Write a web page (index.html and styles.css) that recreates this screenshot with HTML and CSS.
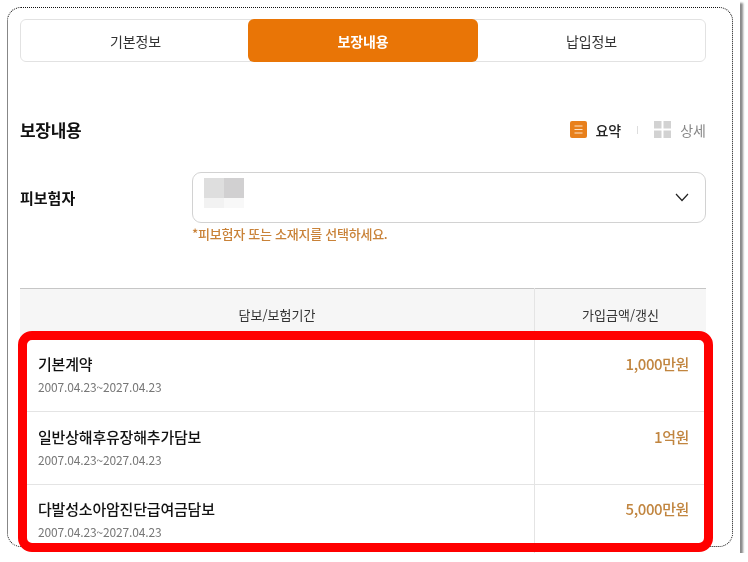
FILE: index.html
```html
<!DOCTYPE html>
<html lang="ko">
<head>
    <meta charset="UTF-8">
    <meta name="viewport" content="width=device-width, initial-scale=1.0">
    <title>보장내용</title>
    <link rel="stylesheet" href="styles.css">
</head>
<body>
    <div class="screen">
        <div class="dashed-box">
            <!-- Tabs -->
            <div class="tabs">
                <div class="tab first">기본정보</div>
                <div class="tab active">보장내용</div>
                <div class="tab">납입정보</div>
            </div>

            <!-- Title row -->
            <div class="title-row">
                <h2>보장내용</h2>
                <div class="view-switch">
                    <span class="view-item on">
                        <svg width="17" height="17" viewBox="0 0 17 17">
                            <rect width="17" height="17" rx="2" fill="#e8801c"/>
                            <path d="M4.5 5h8M4.5 8.5h8M4.5 12h8" stroke="#fbe3c8" stroke-width="1.2"/>
                        </svg>
                        요약
                    </span>
                    <span class="view-sep"></span>
                    <span class="view-item">
                        <svg width="17" height="17" viewBox="0 0 17 17" fill="#d2d2d2">
                            <rect width="7.5" height="7.5"/>
                            <rect x="9.5" width="7.5" height="7.5"/>
                            <rect y="9.5" width="7.5" height="7.5"/>
                            <rect x="9.5" y="9.5" width="7.5" height="7.5"/>
                        </svg>
                        상세
                    </span>
                </div>
            </div>

            <!-- Insured person select -->
            <div class="insured-row">
                <div class="insured-label">피보험자</div>
                <div class="insured-field">
                    <div class="select-box">
                        <div class="blurred-name">
                            <i class="px-a"></i><i class="px-b"></i><i class="px-c"></i><i class="px-d"></i>
                        </div>
                        <svg width="14" height="9" viewBox="0 0 14 9" fill="none">
                            <path d="M1 1l6 6.5L13 1" stroke="#222" stroke-width="1.2"/>
                        </svg>
                    </div>
                    <p class="hint">*피보험자 또는 소재지를 선택하세요.</p>
                </div>
            </div>

            <!-- Coverage table -->
            <table class="coverage">
                <thead>
                    <tr>
                        <th>담보/보험기간</th>
                        <th class="col-amount">가입금액/갱신</th>
                    </tr>
                </thead>
                <tbody>
                    <tr>
                        <td><strong>기본계약</strong><span>2007.04.23~2027.04.23</span></td>
                        <td class="amount">1,000만원</td>
                    </tr>
                    <tr>
                        <td><strong>일반상해후유장해추가담보</strong><span>2007.04.23~2027.04.23</span></td>
                        <td class="amount">1억원</td>
                    </tr>
                    <tr>
                        <td><strong>다발성소아암진단급여금담보</strong><span>2007.04.23~2027.04.23</span></td>
                        <td class="amount">5,000만원</td>
                    </tr>
                </tbody>
            </table>
        </div>

        <!-- Red highlight over the rows -->
        <div class="highlight"></div>
    </div>
</body>
</html>
```

FILE: styles.css
```css
/* General */
body {
    margin: 0;
    background: #fff;
    font-family: "Noto Sans CJK KR", "Noto Sans", sans-serif;
    color: #222;
    overflow: hidden;
}

/* the reference is a slightly soft capture */
.screen {
    position: relative;
    width: 740px;
    height: 553px;
    box-shadow: 3px 3px 2px #8a8a8a;
    overflow: hidden;
    filter: blur(0.3px);
}

.dashed-box {
    box-sizing: border-box;
    width: 726px;
    height: 540px;
    margin: 7px 0 0 7px;
    padding: 11px 26px 0 12px;
    border: 1px dotted #111;
    border-radius: 14px;
}

/* Tabs */
.tabs {
    display: grid;
    grid-template-columns: 227px 230px 1fr;
    height: 43px;
    box-sizing: border-box;
    border: 1px solid #e2e2e2;
    border-radius: 6px;
}

.tab {
    display: flex;
    align-items: center;
    justify-content: center;
    font-size: 14px;
    letter-spacing: -0.1px;
    color: #333;
}

.tab.first {
    padding-left: 2px;
}

.tab.active {
    margin: -1px 0;
    background: #e97506;
    border-radius: 6px;
    color: #fff;
    font-weight: 700;
}

/* Title row */
.title-row {
    display: flex;
    align-items: center;
    justify-content: space-between;
    margin-top: 53px;
    height: 28px;
}

.title-row h2 {
    margin: 0;
    font-size: 17px;
    letter-spacing: -0.3px;
    font-weight: 700;
    color: #111;
}

.view-switch {
    display: flex;
    align-items: center;
    margin-top: 1px;
    font-size: 14px;
}

.view-item {
    display: flex;
    align-items: center;
    gap: 9px;
    color: #888;
}

.view-item.on {
    gap: 8px;
    font-weight: 500;
    color: #222;
}

.view-sep {
    width: 1px;
    height: 8px;
    margin: 0 16px;
    background: #ddd;
}

/* Insured person */
.insured-row {
    display: flex;
    margin-top: 29px;
}

.insured-label {
    width: 172px;
    padding-top: 15px;
    font-size: 15px;
    font-weight: 700;
    color: #111;
}

.insured-field {
    flex: 1;
}

.select-box {
    display: flex;
    align-items: center;
    justify-content: space-between;
    box-sizing: border-box;
    height: 51px;
    padding: 0 16px 0 11px;
    border: 1px solid #d2d2d2;
    border-radius: 9px;
}

.blurred-name {
    display: grid;
    grid-template-columns: 20px 20px;
    grid-template-rows: 20px 10px;
    margin-top: -9px;
}

.px-a { background: #dedede; }
.px-b { background: #d1d0d1; }
.px-c { background: #f2f2f2; }
.px-d { background: #f8f8f8; }

.hint {
    margin: 2px 0 0;
    font-size: 13px;
    font-weight: 500;
    line-height: 18px;
    letter-spacing: -0.25px;
    color: #c98238;
}

/* Coverage table */
.coverage {
    width: 686px;
    margin-top: 45px;
    border-collapse: collapse;
    table-layout: fixed;
    border-top: 1px solid #c6c6c6;
}

.coverage th {
    height: 51px;
    padding: 0;
    background: #f6f6f6;
    font-size: 13px;
    font-weight: 400;
    color: #333;
}

.coverage .col-amount {
    width: 171px;
    border-left: 1px solid #e4e4e4;
}

.coverage td {
    height: 72px;
    box-sizing: border-box;
    padding: 0 0 0 18px;
    border-bottom: 1px solid #e4e4e4;
    vertical-align: top;
}

.coverage tr:nth-child(1) td {
    height: 71px;
}

.coverage tr:nth-child(2) td {
    height: 73px;
}

.coverage td strong {
    display: block;
    margin-top: 12px;
    font-size: 15px;
    font-weight: 500;
    line-height: 24px;
    letter-spacing: -0.2px;
    color: #111;
}

.coverage tr:nth-child(2) td strong {
    margin-top: 13px;
}

.coverage td span {
    display: block;
    margin-top: 2px;
    font-size: 12px;
    line-height: 18px;
    letter-spacing: -0.15px;
    color: #777;
}

.coverage td.amount {
    padding: 12px 17px 0 0;
    border-left: 1px solid #e4e4e4;
    text-align: right;
    font-size: 15px;
    font-weight: 500;
    line-height: 24px;
    letter-spacing: -0.4px;
    color: #c1853f;
}

.coverage tr:nth-child(2) td.amount {
    padding-top: 13px;
}

/* Red highlight */
.highlight {
    position: absolute;
    left: 18px;
    top: 331px;
    width: 695px;
    height: 221px;
    box-sizing: border-box;
    border: 9px solid #f00;
    border-radius: 14px;
}
```
